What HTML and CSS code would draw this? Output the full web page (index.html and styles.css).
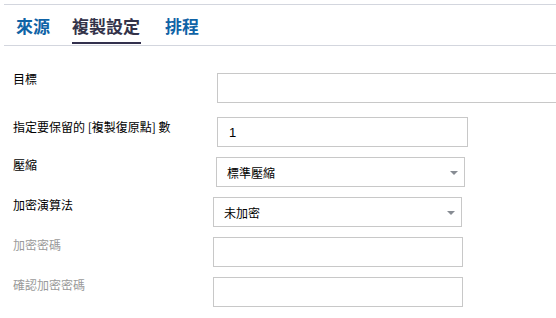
FILE: index.html
```html
<!DOCTYPE html>
<html lang="zh-Hant">
<head>
<meta charset="utf-8">
<link rel="stylesheet" href="styles.css">
</head>
<body>
<div class="page">
  <nav class="tabs">
    <a class="tab tab-first">來源</a>
    <a class="tab tab-active">複製設定</a>
    <a class="tab tab-last">排程</a>
  </nav>
  <form class="form">
    <div class="row row-first">
      <label class="label">目標</label>
      <input class="field field-wide shift-4" type="text" value="">
    </div>
    <div class="row row-second">
      <label class="label">指定要保留的 [複製復原點] 數</label>
      <input class="field shift-4" type="text" value="1">
    </div>
    <div class="row">
      <label class="label">壓縮</label>
      <div class="select shift-3"><span>標準壓縮</span><svg class="caret" width="8" height="4" viewBox="0 0 8 4"><path d="M0 0H8L4 4Z" fill="#878c93"/></svg></div>
    </div>
    <div class="row">
      <label class="label">加密演算法</label>
      <div class="select"><span>未加密</span><svg class="caret" width="8" height="4" viewBox="0 0 8 4"><path d="M0 0H8L4 4Z" fill="#878c93"/></svg></div>
    </div>
    <div class="row">
      <label class="label label-disabled">加密密碼</label>
      <input class="field field-pw" type="password" value="" disabled>
    </div>
    <div class="row">
      <label class="label label-disabled">確認加密密碼</label>
      <input class="field field-pw" type="password" value="" disabled>
    </div>
  </form>
</div>
</body>
</html>
```

FILE: styles.css
```css
html, body {
  margin: 0;
  padding: 0;
  background: #ffffff;
}
body {
  font-family: "Noto Sans CJK TC", "Liberation Sans", sans-serif;
  color: #000;
  width: 556px;
  height: 318px;
  overflow: hidden;
}
.page {
  padding-top: 4px;
}
.tabs {
  margin-left: 4px;
  display: flex;
  height: 40px;
  border-top: 1px solid #d3d6de;
  border-bottom: 1px solid #d3d6de;
}
.tab {
  position: relative;
  display: flex;
  align-items: center;
  font-size: 17px;
  font-weight: 700;
  color: #0f63a6;
  line-height: 1;
  text-decoration: none;
}
.tab-first { margin-left: 12px; }
.tab-active {
  margin-left: 22px;
  color: #33334a;
}
.tab-last { margin-left: 25px; }
.tab-active::after {
  content: "";
  position: absolute;
  left: 0;
  right: -1px;
  bottom: 1px;
  height: 2px;
  background: #33304d;
}
.form {
  padding-left: 13px;
  padding-top: 27px;
  display: flex;
  flex-direction: column;
  gap: 10px;
}
.row {
  display: flex;
  align-items: flex-start;
}
.row-first { margin-bottom: 4px; }
.label {
  width: 200px;
  flex: none;
  font-size: 12px;
  line-height: 16px;
  padding-top: 0;
  color: #000;
}
.row-first .label { margin-top: -2px; }
.row-second .label { margin-top: 2px; }
.label-disabled { color: #9a9a9a; }
.field {
  box-sizing: border-box;
  height: 30px;
  width: 251px;
  border: 1px solid #c8c8c8;
  border-radius: 0;
  padding: 0 11px;
  margin: 0;
  font-family: "Liberation Sans", "Noto Sans CJK TC", sans-serif;
  font-size: 13px;
  color: #000;
  background: #fff;
  outline: none;
}
.field-wide { width: 341px; flex: none; }
.field-pw { width: 250px; }
.shift-4 { margin-left: 4px; }
.shift-3 { margin-left: 3px; }
.select {
  box-sizing: border-box;
  height: 30px;
  width: 249px;
  border: 1px solid #c8c8c8;
  padding: 0 6px 0 10px;
  display: flex;
  align-items: center;
  justify-content: space-between;
  font-size: 12px;
  color: #000;
}
.caret { display: block; margin-top: 1px; }
```
